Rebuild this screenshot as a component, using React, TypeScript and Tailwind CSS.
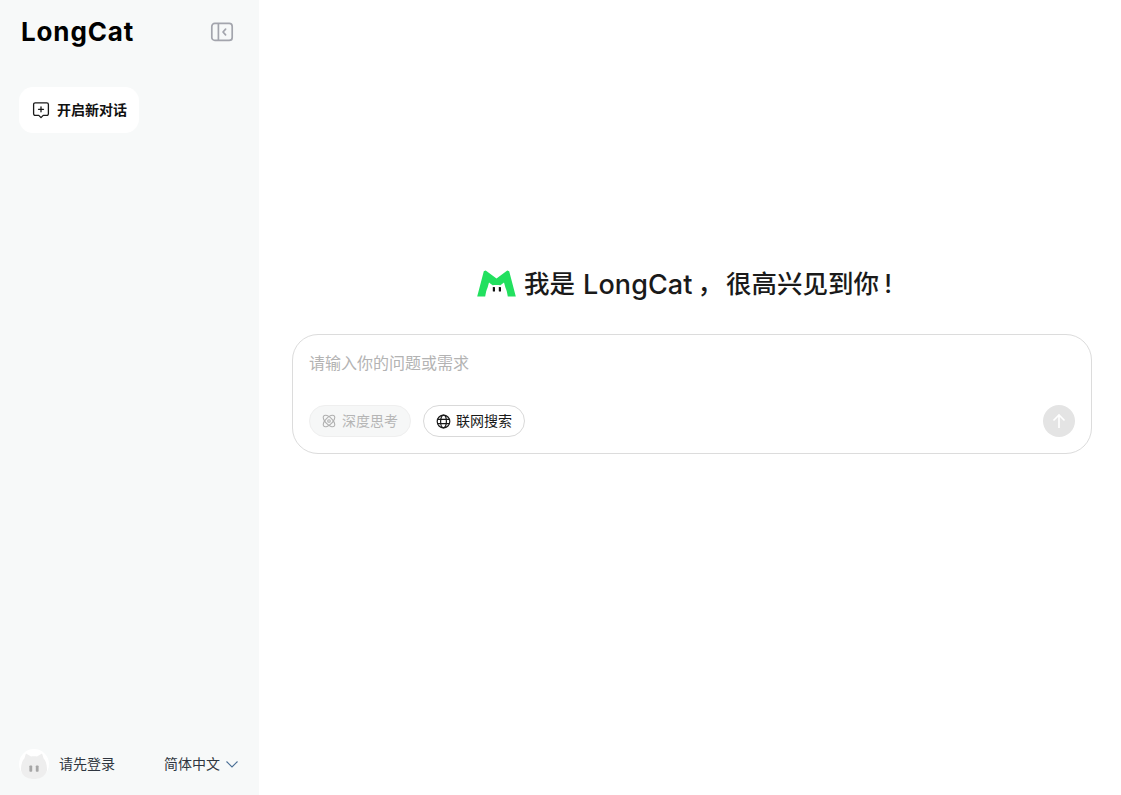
const fontStack = 'font-[Inter,"Noto_Sans_CJK_SC",sans-serif]';

function CollapseIcon() {
  return (
    <svg width="24" height="22" viewBox="0 0 24 22" fill="none" stroke="#a3a5ad" strokeWidth="1.7">
      <rect x="1.8" y="2.4" width="20.4" height="17" rx="3" />
      <path d="M8.4 2.6v16.8" />
      <path d="M15.6 8.2 13 11l2.6 2.8" strokeLinecap="round" strokeLinejoin="round" />
    </svg>
  );
}

function NewChatIcon() {
  return (
    <svg width="18" height="18" viewBox="0 0 18 18" fill="none" stroke="#1a1a1a" strokeWidth="1.3">
      <path
        d="M3.2 1.8h11.6a1.6 1.6 0 0 1 1.6 1.6v9.4a1.6 1.6 0 0 1-1.6 1.6h-3.6L9 16.6l-2.2-2.2H3.2a1.6 1.6 0 0 1-1.6-1.6V3.4a1.6 1.6 0 0 1 1.6-1.6Z"
        strokeLinejoin="round"
      />
      <path d="M9 5.8v5M6.5 8.3h5" strokeLinecap="round" />
    </svg>
  );
}

function LongCatLogo() {
  return (
    <svg width="39" height="28" viewBox="0 0 39 28" fill="none">
      <path
        d="M8.7 0.6 19.5 8.4 30.3 0.6 32.2 1.2 38.8 26.6H30.8C30.2 23 29.6 20 28.4 17.6L27 12.4 23.4 15.2C20.8 14.8 18.2 14.8 15.6 15.2L12 12.4 10.6 17.6C9.4 20 8.8 23 8.2 26.6H0.2L6.8 1.2Z"
        fill="#22e05f"
      />
      <rect x="15.8" y="17" width="2.2" height="4.6" rx="0.6" fill="#111" />
      <rect x="21.8" y="17" width="2.2" height="4.6" rx="0.6" fill="#111" />
    </svg>
  );
}

function ThinkIcon() {
  return (
    <svg width="14" height="14" viewBox="0 0 14 14" fill="none" stroke="#b0b0b0" strokeWidth="1.1">
      <ellipse cx="7" cy="7" rx="7.4" ry="3.5" transform="rotate(45 7 7)" />
      <ellipse cx="7" cy="7" rx="7.4" ry="3.5" transform="rotate(-45 7 7)" />
      <circle cx="7" cy="7" r="1.3" />
    </svg>
  );
}

function GlobeIcon() {
  return (
    <svg width="15" height="15" viewBox="0 0 15 15" fill="none" stroke="#1a1a1a" strokeWidth="1.2">
      <circle cx="7.5" cy="7.5" r="6.3" />
      <ellipse cx="7.5" cy="7.5" rx="2.9" ry="6.3" />
      <path d="M1.6 5.3h11.8M1.6 9.7h11.8" />
    </svg>
  );
}

function Avatar() {
  return (
    <div className="flex h-[30px] w-[30px] items-center justify-center rounded-full bg-white">
      <svg width="30" height="30" viewBox="0 0 30 30">
        <path
          d="M2 21c0-5.5 1.2-9 3.4-11.4C6 7.6 6.4 6 7 4.6L12 7.6c2-0.5 4-0.5 6 0l5-3c0.6 1.4 1 3 1.6 5C26.8 12 28 15.5 28 21c0 0-1 9-13 9S2 21 2 21Z"
          fill="#eeeeee"
        />
        <rect x="10.4" y="16.4" width="2.8" height="6.4" rx="0.8" fill="#a6a6a6" />
        <rect x="16.8" y="16.4" width="2.8" height="6.4" rx="0.8" fill="#a6a6a6" />
      </svg>
    </div>
  );
}

export default function App() {
  return (
    <div className={`flex h-screen bg-white ${fontStack}`}>
      {/* Sidebar */}
      <aside className="flex w-[259px] shrink-0 flex-col bg-[#f7f9f9]">
        <div className="flex h-[64px] items-center justify-between pl-[21px] pr-[25px]">
          <span className="text-[26px] font-bold leading-none tracking-[0.85px] text-black">LongCat</span>
          <CollapseIcon />
        </div>
        <div className="mt-[23px] pl-[19px]">
          <button className="flex h-[46px] w-[120px] items-center gap-[7px] rounded-[14px] bg-white pl-[13px] text-[14px] font-bold whitespace-nowrap text-[#111]">
            <NewChatIcon />
            <span className="pb-[2px]">开启新对话</span>
          </button>
        </div>
        <div className="mt-auto flex h-[62px] items-center justify-between pb-[1px] pl-[19px] pr-[20px]">
          <div className="flex items-center gap-[10px]">
            <Avatar />
            <span className="pb-[1px] text-[14px] text-[#2f3640]">请先登录</span>
          </div>
          <div className="flex items-center gap-[5px] text-[14px] text-[#2f3640]">
            <span className="pb-[1px]">简体中文</span>
            <svg width="14" height="14" viewBox="0 0 14 14" fill="none" stroke="#4a6f96" strokeWidth="1.1">
              <path d="M1.5 4.5 7 10l5.5-5.5" />
            </svg>
          </div>
        </div>
      </aside>

      {/* Main */}
      <main className="flex-1 pl-[33px] pt-[268px]">
        <div className="w-[800px]">
          <div className="flex h-[34px] items-center gap-[8px] pb-[2px] pl-[185px] text-[25.5px] font-medium leading-none whitespace-nowrap text-[#1a1a1a]">
            <LongCatLogo />
            <span className="flex items-center">
              我是
              <span className="ml-[8px] text-[27px] tracking-[0.1px]">LongCat</span>
              <span className="ml-[5px]">，</span>
              <span className="ml-[3px]">很高兴见到你</span>
              <span className="ml-[5px]">!</span>
            </span>
          </div>
          <div className="mt-[32px] flex h-[120px] flex-col rounded-[26px] border border-[#dcdcdc] bg-white px-[16px] pb-[16px] pt-[16px]">
            <div className="text-[16px] leading-[24px] text-[#b3b3b3]">请输入你的问题或需求</div>
            <div className="mt-auto flex items-center gap-[12px]">
              <button className="flex h-[32px] w-[102px] items-center justify-center gap-[6px] rounded-full border border-[#efefef] bg-[#f6f7f7] text-[14px] text-[#b5b5b5]">
                <ThinkIcon />
                <span className="pb-[2px]">深度思考</span>
              </button>
              <button className="flex h-[32px] w-[102px] items-center justify-center gap-[5px] rounded-full border border-[#d9d9d9] bg-white text-[14px] text-[#1a1a1a]">
                <GlobeIcon />
                <span className="pb-[2px]">联网搜索</span>
              </button>
              <button className="ml-auto flex h-[32px] w-[32px] items-center justify-center rounded-full bg-[#e4e4e4]">
                <svg width="16" height="16" viewBox="0 0 16 16" fill="none" stroke="#fff" strokeWidth="1.6">
                  <path d="M8 15V2M2.5 7.5 8 2l5.5 5.5" />
                </svg>
              </button>
            </div>
          </div>
        </div>
      </main>
    </div>
  );
}
